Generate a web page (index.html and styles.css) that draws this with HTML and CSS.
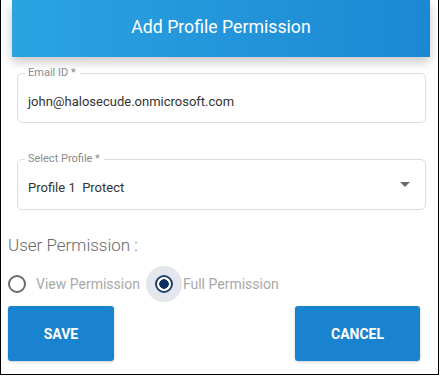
FILE: index.html
```html
<!DOCTYPE html>
<html lang="en">
<head>
    <meta charset="UTF-8">
    <meta name="viewport" content="width=device-width, initial-scale=1.0">
    <title>Add Profile Permission</title>
    <link rel="stylesheet" href="styles.css">
</head>
<body>
    <div class="frame">
        <div class="header">Add Profile Permission</div>

        <fieldset class="field">
            <legend>Email ID *</legend>
            <div class="value">john@halosecude.onmicrosoft.com</div>
        </fieldset>

        <fieldset class="field select">
            <legend>Select Profile *</legend>
            <div class="value">Profile 1&nbsp; Protect</div>
            <span class="arrow"></span>
        </fieldset>

        <div class="perm-title">User Permission :</div>

        <div class="radios">
            <label class="radio"><span class="circle"></span>View Permission</label>
            <label class="radio checked"><span class="circle"></span>Full Permission</label>
        </div>

        <div class="actions">
            <button class="btn save">SAVE</button>
            <button class="btn cancel">CANCEL</button>
        </div>
    </div>
</body>
</html>
```

FILE: styles.css
```css
body {
    margin: 0;
    font-family: Roboto, "Liberation Sans", Arial, sans-serif;
    background-color: white;
}
.frame {
    box-sizing: border-box;
    width: 439px;
    height: 375px;
    border: 1px solid black;
    border-top: none;
    overflow: hidden;
}
.header {
    margin-left: 11px;
    width: 418px;
    height: 57px;
    background: linear-gradient(90deg, #2ba3e1, #1c88d4);
    box-shadow: 0 5px 10px rgba(0, 0, 0, 0.22);
    color: white;
    font-size: 17.7px;
    line-height: 54px;
    text-align: center;
}
.field {
    box-sizing: border-box;
    width: 409px;
    margin: 9px 0 0 16px;
    padding: 0 10px;
    height: 57px;
    border: 1px solid #dcdcdc;
    border-radius: 5px;
    display: flex;
    align-items: center;
}
.field legend {
    padding: 0 4px 0 3px;
    margin-left: -3px;
    font-size: 11px;
    color: #8a8a8a;
    line-height: 14px;
}
.field .value {
    flex: 1;
    font-size: 13px;
    color: #333;
    margin-top: 0;
}
.select {
    margin-top: 29px;
    height: 58px;
}
.select .value {
    margin-top: -1px;
}
.arrow {
    width: 0;
    height: 0;
    border-left: 5px solid transparent;
    border-right: 5px solid transparent;
    border-top: 5px solid #6b6b6b;
    margin: -6px 5px 0 0;
}
.perm-title {
    margin: 25px 0 0 7px;
    font-size: 17px;
    font-weight: 300;
    color: #6a6a6a;
}
.radios {
    display: flex;
    align-items: center;
    margin: 15px 0 0 7px;
    height: 28px;
}
.radio {
    display: flex;
    align-items: center;
    gap: 10px;
    font-size: 14px;
    color: #a9a9a9;
}
.radio.checked {
    margin-left: 15px;
}
.circle {
    box-sizing: border-box;
    width: 18px;
    height: 18px;
    border: 2px solid #6b6b6b;
    border-radius: 50%;
    background-color: white;
}
.checked .circle {
    border-color: #233f6e;
    background: radial-gradient(circle, #0d2d63 4.5px, white 5px);
    box-shadow: 0 0 0 9px #e3e6ec;
}
.actions {
    display: flex;
    justify-content: space-between;
    margin: 8px 18px 0 7px;
}
.btn {
    height: 55px;
    border: none;
    border-radius: 3px;
    background-color: #1a83cf;
    color: white;
    font-family: Roboto, "Liberation Sans", Arial, sans-serif;
    font-size: 14px;
    font-weight: bold;
    box-shadow: 0 1px 3px rgba(0, 0, 0, 0.2);
}
.save {
    width: 106px;
}
.cancel {
    width: 125px;
}
```
